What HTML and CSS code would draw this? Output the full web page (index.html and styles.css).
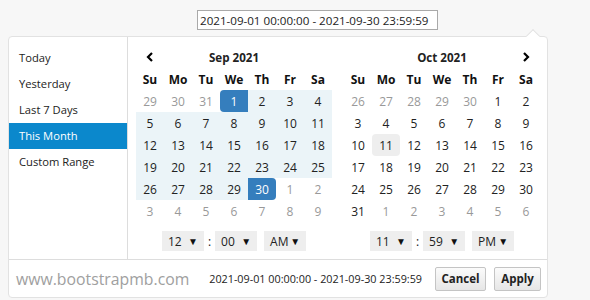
FILE: index.html
```html
<!DOCTYPE html>
<html lang="en">
<head>
    <meta charset="UTF-8">
    <title>Date Range Picker</title>
    <link rel="stylesheet" href="styles.css">
</head>
<body>
    <input type="text" class="range-input" value="2021-09-01 00:00:00 - 2021-09-30 23:59:59">

    <div class="picker">
        <div class="picker-body">
            <ul class="ranges">
                <li>Today</li>
                <li>Yesterday</li>
                <li>Last 7 Days</li>
                <li class="active">This Month</li>
                <li>Custom Range</li>
            </ul>

            <div class="calendar left">
                <div class="cal-grid" id="calLeft">
                    <div class="nav"><svg width="8" height="10" viewBox="0 0 8 10"><polyline points="6,1 2,5 6,9" fill="none" stroke="#000" stroke-width="2.2"/></svg></div>
                    <div class="month">Sep 2021</div>
                    <div class="nav"></div>
                </div>
                <div class="time">
                    <span class="sel">12 <i>&#9660;</i></span>
                    <span class="colon">:</span>
                    <span class="sel">00 <i>&#9660;</i></span>
                    <span class="sel">AM <i>&#9660;</i></span>
                </div>
            </div>

            <div class="calendar right">
                <div class="cal-grid" id="calRight">
                    <div class="nav"></div>
                    <div class="month">Oct 2021</div>
                    <div class="nav"><svg width="8" height="10" viewBox="0 0 8 10"><polyline points="2,1 6,5 2,9" fill="none" stroke="#000" stroke-width="2.2"/></svg></div>
                </div>
                <div class="time">
                    <span class="sel">11 <i>&#9660;</i></span>
                    <span class="colon">:</span>
                    <span class="sel">59 <i>&#9660;</i></span>
                    <span class="sel">PM <i>&#9660;</i></span>
                </div>
            </div>
        </div>

        <div class="picker-footer">
            <span class="watermark">www.bootstrapmb.com</span>
            <span class="selected">2021-09-01 00:00:00 - 2021-09-30 23:59:59</span>
            <button class="btn cancel">Cancel</button>
            <button class="btn apply">Apply</button>
        </div>
    </div>

    <script>
        const weekdays = ['Su', 'Mo', 'Tu', 'We', 'Th', 'Fr', 'Sa'];

        // each cell: [day, class]
        function buildMonth(el, days) {
            weekdays.forEach(w => {
                const d = document.createElement('div');
                d.className = 'wd';
                d.textContent = w;
                el.appendChild(d);
            });
            days.forEach(([n, cls]) => {
                const d = document.createElement('div');
                d.className = 'day ' + (cls || '');
                d.textContent = n;
                el.appendChild(d);
            });
        }

        const sep = [];
        [29, 30, 31].forEach(n => sep.push([n, 'off']));
        for (let i = 1; i <= 30; i++) {
            let cls = 'in-range';
            if (i === 1) cls = 'start';
            if (i === 30) cls = 'end';
            sep.push([i, cls]);
        }
        for (let i = 1; i <= 9; i++) sep.push([i, 'off']);

        const oct = [];
        [26, 27, 28, 29, 30].forEach(n => oct.push([n, 'off']));
        for (let i = 1; i <= 31; i++) oct.push([i, i === 11 ? 'today' : '']);
        for (let i = 1; i <= 6; i++) oct.push([i, 'off']);

        buildMonth(document.getElementById('calLeft'), sep);
        buildMonth(document.getElementById('calRight'), oct);
    </script>
</body>
</html>
```

FILE: styles.css
```css
body {
    margin: 0;
    padding: 10px 8px 0;
    background-color: #f7f7f7;
    font-family: "Open Sans", sans-serif;
    color: #222;
}
.range-input {
    display: block;
    margin-left: 189px;
    width: 235px;
    height: 16px;
    padding: 1px 2px;
    border: 1px solid #a9a9a9;
    background: #fff;
    font-family: "Open Sans", sans-serif;
    font-size: 11.6px;
    color: #222;
}
.picker {
    position: relative;
    margin-top: 6px;
    width: 538px;
    background: #fff;
    border: 1px solid #e2e2e2;
    border-radius: 4px;
}
.picker::before {
    content: "";
    position: absolute;
    top: -6px;
    right: 9px;
    width: 9px;
    height: 9px;
    background: #fff;
    border-top: 1px solid #e2e2e2;
    border-left: 1px solid #e2e2e2;
    transform: rotate(45deg);
}
.picker-body {
    display: flex;
    border-bottom: 1px solid #ddd;
}
.ranges {
    flex-shrink: 0;
    list-style: none;
    margin: 0;
    padding: 8px 0 0;
    width: 118px;
    border-right: 1px solid #ddd;
}
.ranges li {
    height: 26px;
    line-height: 26px;
    padding-left: 10px;
    font-size: 11.2px;
    color: #222;
}
.ranges li.active {
    background-color: #0b88cc;
    color: #fff;
}
.calendar {
    flex-shrink: 0;
    padding: 9px 0 8px 8px;
}
.calendar.right {
    padding: 9px 7px 8px 12px;
}
.cal-grid {
    display: grid;
    grid-template-columns: repeat(7, 28px);
    grid-auto-rows: 22px;
    font-size: 12px;
}
.nav {
    display: flex;
    align-items: center;
    justify-content: center;
}
.month {
    grid-column: span 5;
    display: flex;
    align-items: center;
    justify-content: center;
    font-weight: bold;
    font-size: 11.6px;
}
.wd, .day {
    display: flex;
    align-items: center;
    justify-content: center;
}
.wd {
    font-weight: bold;
    color: #111;
}
.day.off {
    color: #999;
}
.day.in-range {
    background-color: #ebf4f8;
}
.day.start, .day.end {
    background-color: #357ebd;
    color: #fff;
}
.day.start {
    border-radius: 4px 0 0 4px;
}
.day.end {
    border-radius: 0 4px 4px 0;
}
.day.today {
    background-color: #eee;
    border-radius: 4px;
}
.time {
    display: flex;
    justify-content: center;
    align-items: center;
    margin-top: 9px;
    font-size: 12px;
}
.sel {
    box-sizing: border-box;
    display: flex;
    align-items: center;
    justify-content: space-between;
    width: 42px;
    height: 20px;
    padding: 0 6px 0 6px;
    background-color: #eee;
    color: #222;
    margin-right: 7px;
}
.sel i {
    font-style: normal;
    font-size: 10px;
    color: #111;
}
.colon {
    margin: 0 4px 0 -3px;
}
.time .sel:last-child {
    margin-right: 0;
}
.picker-footer {
    display: flex;
    align-items: center;
    height: 37px;
    padding: 0 6px 0 7px;
    white-space: nowrap;
}
.watermark {
    font-size: 15.8px;
    color: #a0a0a0;
    margin-right: auto;
}
.selected {
    font-size: 10.8px;
    color: #222;
    margin-right: 5px;
}
.btn {
    box-sizing: border-box;
    height: 24px;
    padding: 0;
    margin: 0 0 0 8px;
    border: 1px solid #c4c4c4;
    border-radius: 2px;
    background: linear-gradient(#fbfbfb, #e6e6e6);
    font-family: "Open Sans", sans-serif;
    font-size: 11.5px;
    font-weight: bold;
    color: #222;
}
.btn.cancel {
    width: 51px;
}
.btn.apply {
    width: 47px;
}
```
